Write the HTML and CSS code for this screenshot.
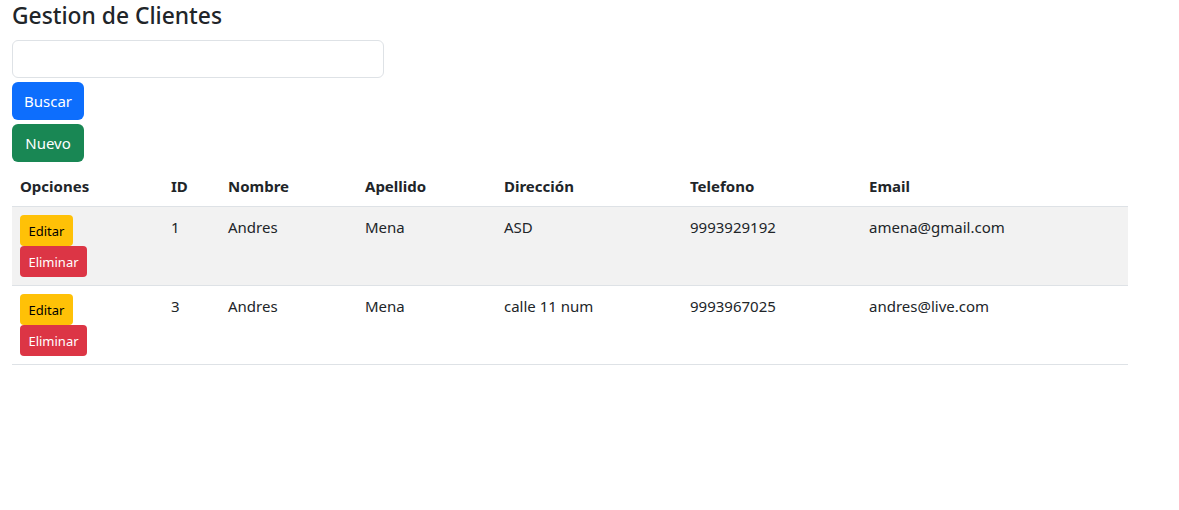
FILE: index.html
```html
<!DOCTYPE html>
<html lang="es">
<head>
<meta charset="utf-8">
<title>Gestion de Clientes</title>
<link rel="stylesheet" href="styles.css">
</head>
<body>
<main class="page">
  <h1 class="title">Gestion de Clientes</h1>
  <div class="controls">
    <input class="search" type="text">
    <button class="btn btn-primary">Buscar</button>
    <button class="btn btn-success">Nuevo</button>
  </div>
  <table class="grid">
    <colgroup>
      <col class="c1"><col class="c2"><col class="c3"><col class="c4"><col class="c5"><col class="c6"><col class="c7">
    </colgroup>
    <thead>
      <tr><th>Opciones</th><th>ID</th><th>Nombre</th><th>Apellido</th><th>Dirección</th><th>Telefono</th><th>Email</th></tr>
    </thead>
    <tbody>
      <tr class="odd">
        <td><div class="ops"><button class="btn-sm btn-warning">Editar</button><button class="btn-sm btn-danger">Eliminar</button></div></td>
        <td>1</td><td>Andres</td><td>Mena</td><td>ASD</td><td>9993929192</td><td>amena@gmail.com</td>
      </tr>
      <tr>
        <td><div class="ops"><button class="btn-sm btn-warning">Editar</button><button class="btn-sm btn-danger">Eliminar</button></div></td>
        <td>3</td><td>Andres</td><td>Mena</td><td>calle 11 num</td><td>9993967025</td><td>andres@live.com</td>
      </tr>
    </tbody>
  </table>
</main>
</body>
</html>
```
FILE: styles.css
```css
* { box-sizing: border-box; }
body {
  margin: 0;
  font-family: "Noto Sans", "Open Sans", sans-serif;
  font-size: 15px;
  color: #212529;
  background: #fff;
}
.page { padding: 0 12px; }
.title {
  margin: 0;
  padding-top: 1px;
  font-size: 22.8px;
  font-weight: 500;
  line-height: 29px;
  height: 40px;
}
.controls {
  display: flex;
  flex-direction: column;
  align-items: flex-start;
  gap: 4px;
}
.search {
  width: 372px;
  height: 38px;
  border: 1px solid #dee2e6;
  border-radius: 6px;
  margin: 0;
}
.btn {
  height: 38px;
  width: 72px;
  border: none;
  border-radius: 6px;
  color: #fff;
  font-family: inherit;
  font-size: 15px;
  padding: 0;
}
.btn-primary { background: #0d6efd; }
.btn-success { background: #198754; }
.grid {
  margin-top: 4px;
  width: 1116px;
  border-collapse: collapse;
  table-layout: fixed;
}
.c1 { width: 151px; } .c2 { width: 57px; } .c3 { width: 137px; } .c4 { width: 139px; }
.c5 { width: 186px; } .c6 { width: 179px; } .c7 { width: 267px; }
.grid th, .grid td {
  text-align: left;
  vertical-align: top;
  padding: 8px;
  line-height: 24px;
  border-bottom: 1px solid #dee2e6;
}
.grid th { font-weight: 700; }
.grid tr.odd td { background: #f2f2f2; }
.ops { display: flex; flex-direction: column; align-items: flex-start; gap: 0; }
.btn-sm {
  height: 31px;
  border: none;
  border-radius: 4px;
  font-family: inherit;
  font-size: 13px;
  padding: 0 8px;
}
.btn-warning { background: #ffc107; color: #000; width: 53px; }
.btn-danger { background: #dc3545; color: #fff; width: 67px; }
```
